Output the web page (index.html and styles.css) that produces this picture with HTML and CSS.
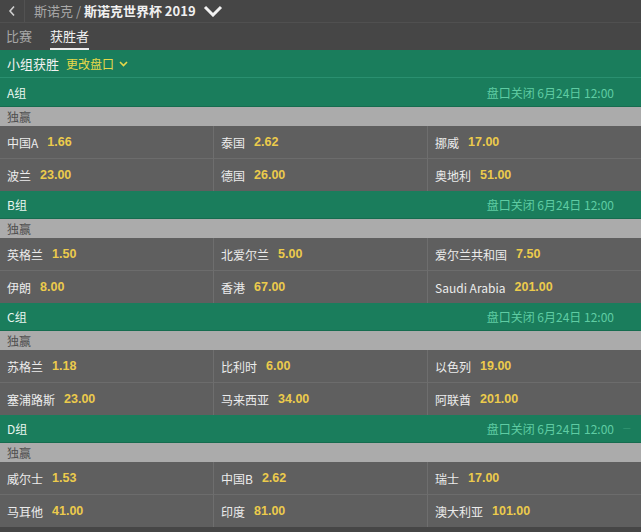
FILE: index.html
```html
<!DOCTYPE html>
<html lang="zh">
<head>
<meta charset="utf-8">
<link rel="stylesheet" href="styles.css">
</head>
<body>
<div class="topbar">
  <span class="back"><svg width="8" height="12" viewBox="0 0 8 12"><path d="M6 1.5L2 6l4 4.5" fill="none" stroke="#cfcfcf" stroke-width="1.6"/></svg></span>
  <span class="crumb"><span class="crumb-dim">斯诺克 / </span><span class="crumb-main">斯诺克世界杯 2019</span></span>
  <svg class="chev" width="20" height="12" viewBox="0 0 20 12"><path d="M2 2l8 8 8-8" fill="none" stroke="#f2f2f2" stroke-width="3"/></svg>
</div>
<div class="tabs">
  <span class="tab">比赛</span>
  <span class="tab active">获胜者</span>
</div>
<div class="market-head">
  <span class="mh-title">小组获胜</span>
  <span class="mh-change">更改盘口</span>
  <svg width="9" height="6" viewBox="0 0 9 6"><path d="M1 1l3.5 3.5L8 1" fill="none" stroke="#e6d84a" stroke-width="1.6"/></svg>
</div>

<div class="group">
  <div class="group-head first"><span>A组</span><span class="close">盘口关闭 6月24日 12:00</span></div>
  <div class="sub">独赢</div>
  <div class="grid">
    <div class="cell"><span class="name">中国A</span><span class="odds">1.66</span></div>
    <div class="cell"><span class="name">泰国</span><span class="odds">2.62</span></div>
    <div class="cell"><span class="name">挪威</span><span class="odds">17.00</span></div>
    <div class="cell"><span class="name">波兰</span><span class="odds">23.00</span></div>
    <div class="cell"><span class="name">德国</span><span class="odds">26.00</span></div>
    <div class="cell"><span class="name">奥地利</span><span class="odds">51.00</span></div>
  </div>
</div>

<div class="group">
  <div class="group-head"><span>B组</span><span class="close">盘口关闭 6月24日 12:00</span></div>
  <div class="sub">独赢</div>
  <div class="grid">
    <div class="cell"><span class="name">英格兰</span><span class="odds">1.50</span></div>
    <div class="cell"><span class="name">北爱尔兰</span><span class="odds">5.00</span></div>
    <div class="cell"><span class="name">爱尔兰共和国</span><span class="odds">7.50</span></div>
    <div class="cell"><span class="name">伊朗</span><span class="odds">8.00</span></div>
    <div class="cell"><span class="name">香港</span><span class="odds">67.00</span></div>
    <div class="cell"><span class="name">Saudi Arabia</span><span class="odds">201.00</span></div>
  </div>
</div>

<div class="group">
  <div class="group-head"><span>C组</span><span class="close">盘口关闭 6月24日 12:00</span></div>
  <div class="sub">独赢</div>
  <div class="grid">
    <div class="cell"><span class="name">苏格兰</span><span class="odds">1.18</span></div>
    <div class="cell"><span class="name">比利时</span><span class="odds">6.00</span></div>
    <div class="cell"><span class="name">以色列</span><span class="odds">19.00</span></div>
    <div class="cell"><span class="name">塞浦路斯</span><span class="odds">23.00</span></div>
    <div class="cell"><span class="name">马来西亚</span><span class="odds">34.00</span></div>
    <div class="cell"><span class="name">阿联酋</span><span class="odds">201.00</span></div>
  </div>
</div>

<div class="group">
  <div class="group-head"><span>D组</span><span class="close">盘口关闭 6月24日 12:00<span class="faint">—</span></span></div>
  <div class="sub">独赢</div>
  <div class="grid">
    <div class="cell"><span class="name">威尔士</span><span class="odds">1.53</span></div>
    <div class="cell"><span class="name">中国B</span><span class="odds">2.62</span></div>
    <div class="cell"><span class="name">瑞士</span><span class="odds">17.00</span></div>
    <div class="cell"><span class="name">马耳他</span><span class="odds">41.00</span></div>
    <div class="cell"><span class="name">印度</span><span class="odds">81.00</span></div>
    <div class="cell"><span class="name">澳大利亚</span><span class="odds">101.00</span></div>
  </div>
</div>
</body>
</html>
```
FILE: styles.css
```css
* { box-sizing: border-box; }
html, body { margin: 0; padding: 0; }
body {
  background: #464646;
  font-family: "Noto Sans CJK SC", "Noto Sans", "Liberation Sans", sans-serif;
  font-size: 12px;
  color: #e6e6e6;
  width: 641px;
  overflow: hidden;
}
.topbar {
  height: 23px;
  display: flex;
  align-items: center;
  border-bottom: 1px solid #505050;
  background: #464646;
}
.back {
  width: 25px;
  height: 22px;
  display: flex;
  align-items: center;
  justify-content: center;
  border-right: 1px solid #525252;
  margin-right: 9px;
}
.crumb { font-size: 13px; line-height: 22px; }
.crumb-dim { color: #a8a8a8; }
.crumb-main { color: #f0f0f0; font-weight: bold; }
.chev { margin-left: 7px; }
.tabs {
  height: 27px;
  display: flex;
  align-items: stretch;
  gap: 18px;
  padding-left: 6px;
}
.tab {
  color: #a8a8a8;
  font-size: 13px;
  line-height: 25px;
  border-bottom: 2px solid transparent;
}
.tab.active { color: #f0f0f0; border-bottom-color: #ededed; }
.market-head {
  background: #1a7d5c;
  height: 28px;
  display: flex;
  align-items: center;
  padding-left: 7px;
  border-bottom: 1px solid #2a9070;
}
.mh-title { font-size: 13px; color: #f2f2f2; margin-right: 7px; }
.mh-change { font-size: 12px; color: #e6d84a; margin-right: 5px; }
.group-head {
  background: #1a7d5c;
  height: 28px;
  display: flex;
  align-items: center;
  justify-content: space-between;
  padding: 0 27px 0 7px;
  color: #e8f5ef;
  border-bottom: 1px solid #166c4f;
}
.group-head.first { height: 29px; }
.close { color: #5fcca3; position: relative; }
.faint { position: absolute; left: 136px; color: #3a9d7a; font-size: 9px; top: 1px; }
.sub {
  background: #ababab;
  height: 19px;
  line-height: 19px;
  padding-left: 7px;
  color: #505050;
  font-size: 12px;
}
.grid {
  display: grid;
  grid-template-columns: 213px 214px 214px;
  background: #5f5f5f;
}
.cell {
  height: 32px;
  display: flex;
  align-items: center;
  gap: 9px;
  padding-left: 7px;
  border-left: 1px solid #6e6e6e;
}
.cell:nth-child(3n+1) { border-left: none; }
.cell:nth-child(n+4) { height: 33px; border-top: 1px solid #6c6c6c; }
.name { color: #ececec; }
.odds { color: #eccb4c; font-weight: bold; font-family: "Liberation Sans", "Noto Sans", sans-serif; font-size: 12.5px; }
```
